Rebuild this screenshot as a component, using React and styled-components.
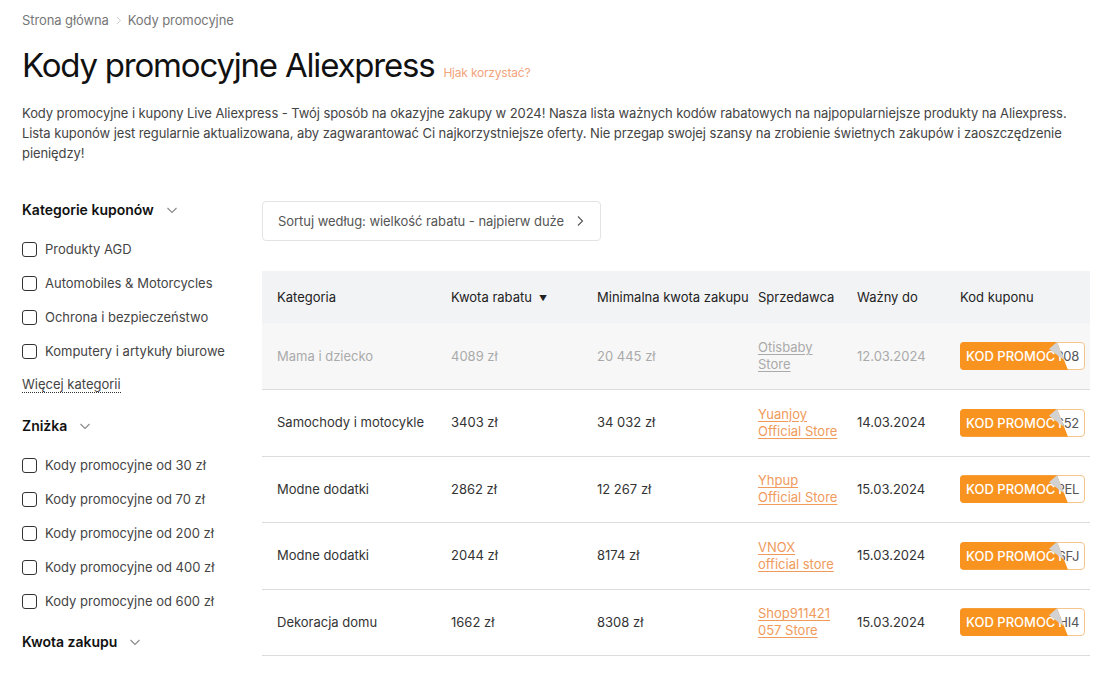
import React from "react";
import styled, { createGlobalStyle } from "styled-components";

const GlobalStyle = createGlobalStyle`
  * { box-sizing: border-box; }
  body {
    margin: 0;
    background: #fff;
    font-family: Inter, "Noto Sans", Arial, sans-serif;
    color: #333;
  }
`;

const ORANGE = "#f7931e";

const Page = styled.div`
  padding: 10px 17px 20px 22px;
`;

const Breadcrumbs = styled.nav`
  display: flex;
  align-items: center;
  gap: 5px;
  font-size: 13px;
  line-height: 20px;
  color: #777;
  letter-spacing: -0.1px;
`;

const Crumb = styled.span`
  color: #777;
`;

const TitleRow = styled.div`
  display: flex;
  align-items: baseline;
  gap: 9px;
  margin-top: 15px;
`;

const Title = styled.h1`
  margin: 0;
  font-size: 33px;
  line-height: 40px;
  font-weight: 400;
  color: #111;
  letter-spacing: -1.2px;
`;

const HowTo = styled.a`
  font-size: 12px;
  color: #f2a47c;
  text-decoration: none;
  letter-spacing: -0.2px;
`;

const Intro = styled.p`
  margin: 18px 0 0;
  font-size: 13px;
  line-height: 20px;
  color: #444;
  max-width: 1058px;
  letter-spacing: -0.08px;
`;

const Layout = styled.div`
  display: grid;
  grid-template-columns: 240px 1fr;
  margin-top: 37px;
`;

const Sidebar = styled.aside`
  display: flex;
  flex-direction: column;
`;

const FilterGroup = styled.div`
  display: flex;
  flex-direction: column;
  & + & {
    margin-top: 14px;
  }
`;

const GroupHeading = styled.div`
  display: flex;
  align-items: center;
  gap: 12px;
  font-size: 14px;
  line-height: 20px;
  font-weight: 600;
  color: #111;
  margin-bottom: 12px;
`;

const Option = styled.label`
  display: flex;
  align-items: center;
  gap: 8px;
  height: 34px;
  font-size: 13px;
  color: #444;
`;

const Box = styled.span`
  width: 15px;
  height: 15px;
  border: 1.5px solid #333;
  border-radius: 3px;
  flex: none;
`;

const MoreRow = styled.div`
  height: 34px;
  display: flex;
  align-items: center;
`;

const MoreLink = styled.a`
  font-size: 13px;
  color: #444;
  text-decoration: none;
  border-bottom: 1px dotted #333;
  line-height: 15px;
`;

const Main = styled.main`
  display: flex;
  flex-direction: column;
  align-items: flex-start;
  padding-top: 1px;
`;

const SortButton = styled.button`
  display: flex;
  align-items: center;
  gap: 10px;
  height: 40px;
  padding: 0 14px 0 15px;
  background: #fff;
  border: 1px solid #e3e3e3;
  border-radius: 4px;
  font-family: inherit;
  font-size: 13px;
  letter-spacing: -0.05px;
  color: #555;
  cursor: pointer;
`;

const Table = styled.table`
  margin-top: 30px;
  width: 828px;
  border-collapse: collapse;
  table-layout: fixed;
  font-size: 13px;
`;

const HeadCell = styled.th`
  height: 52px;
  padding: 0 4px 0 15px;
  background: #f2f3f5;
  text-align: left;
  font-weight: 400;
  color: #222;
  white-space: nowrap;
`;

const SortMark = styled.span`
  font-size: 8px;
  margin-left: 7px;
  vertical-align: 1px;
`;

const Row = styled.tr`
  background: ${(p) => (p.$expired ? "#f7f7f7" : "#fff")};
  color: ${(p) => (p.$expired ? "#aaa" : "#333")};
  border-bottom: 1px solid #dcdcdc;
`;

const Cell = styled.td`
  height: 66.5px;
  padding: 0 4px 0 15px;
  vertical-align: middle;
  line-height: 17px;
`;

const SellerLink = styled.a`
  display: block;
  white-space: nowrap;
  color: ${(p) => (p.$expired ? "#aaa" : "#f09a5c")};
  text-decoration: underline;
  text-underline-offset: 2px;
`;

const Coupon = styled.div`
  position: relative;
  width: 125px;
  height: 28px;
`;

const CodeBox = styled.div`
  height: 100%;
  border: 1px solid #f5c58c;
  border-radius: 4px;
  background: #fff;
  color: #555;
  font-size: 13px;
  letter-spacing: -0.3px;
  line-height: 26px;
  text-align: right;
  padding-right: 5px;
`;

const CouponButton = styled.div`
  position: absolute;
  inset: 0 auto 0 0;
  width: 108px;
  background: ${ORANGE};
  border-radius: 4px 0 0 4px;
  clip-path: polygon(0 0, 97px 0, 108px 100%, 0 100%);
  color: #fff;
  font-weight: 500;
  font-size: 13px;
  line-height: 28px;
  padding-left: 6px;
  white-space: nowrap;
  overflow: hidden;
`;

/* peeled corner of the coupon cover */
const Fold = styled.div`
  position: absolute;
  left: 89px;
  top: 0;
  width: 16px;
  height: 19px;
  background: #d2d2d2;
  clip-path: polygon(8px 0, 15px 18px, 0 7px);
`;

const Chevron = ({ dir = "down", size = 12, color = "#888" }) => (
  <svg width={size} height={size} viewBox="0 0 12 12" fill="none">
    {dir === "down" ? (
      <path d="M1.5 4l4.5 4.5L10.5 4" stroke={color} strokeWidth="1.1" />
    ) : (
      <path d="M4 1.5l4.5 4.5L4 10.5" stroke={color} strokeWidth="1.1" />
    )}
  </svg>
);

const categories = [
  "Produkty AGD",
  "Automobiles & Motorcycles",
  "Ochrona i bezpieczeństwo",
  "Komputery i artykuły biurowe",
];

const discounts = [30, 70, 200, 400, 600].map((v) => `Kody promocyjne od ${v} zł`);

const coupons = [
  { cat: "Mama i dziecko", amount: "4089 zł", min: "20 445 zł", seller: ["Otisbaby", "Store"], date: "12.03.2024", code: "308", expired: true },
  { cat: "Samochody i motocykle", amount: "3403 zł", min: "34 032 zł", seller: ["Yuanjoy", "Official Store"], date: "14.03.2024", code: "652" },
  { cat: "Modne dodatki", amount: "2862 zł", min: "12 267 zł", seller: ["Yhpup", "Official Store"], date: "15.03.2024", code: "PEL" },
  { cat: "Modne dodatki", amount: "2044 zł", min: "8174 zł", seller: ["VNOX", "official store"], date: "15.03.2024", code: "6FJ" },
  { cat: "Dekoracja domu", amount: "1662 zł", min: "8308 zł", seller: ["Shop911421", "057 Store"], date: "15.03.2024", code: "HI4" },
];

const columns = [174, 146, 161, 99, 103, 145];

export default function App() {
  return (
    <>
      <GlobalStyle />
      <Page>
        <Breadcrumbs>
          <Crumb>Strona główna</Crumb>
          <Chevron dir="right" size={9} color="#bbb" />
          <Crumb>Kody promocyjne</Crumb>
        </Breadcrumbs>

        <TitleRow>
          <Title>Kody promocyjne Aliexpress</Title>
          <HowTo href="#">Hjak korzystać?</HowTo>
        </TitleRow>

        <Intro>
          Kody promocyjne i kupony Live Aliexpress - Twój sposób na okazyjne zakupy w 2024! Nasza lista ważnych
          kodów rabatowych na najpopularniejsze produkty na Aliexpress. Lista kuponów jest regularnie
          aktualizowana, aby zagwarantować Ci najkorzystniejsze oferty. Nie przegap swojej szansy na zrobienie
          świetnych zakupów i zaoszczędzenie pieniędzy!
        </Intro>

        <Layout>
          <Sidebar>
            <FilterGroup>
              <GroupHeading>
                Kategorie kuponów <Chevron />
              </GroupHeading>
              {categories.map((c) => (
                <Option key={c}>
                  <Box />
                  {c}
                </Option>
              ))}
              <MoreRow>
                <MoreLink href="#">Więcej kategorii</MoreLink>
              </MoreRow>
            </FilterGroup>

            <FilterGroup>
              <GroupHeading>
                Zniżka <Chevron />
              </GroupHeading>
              {discounts.map((d) => (
                <Option key={d}>
                  <Box />
                  {d}
                </Option>
              ))}
            </FilterGroup>

            <FilterGroup>
              <GroupHeading>
                Kwota zakupu <Chevron />
              </GroupHeading>
            </FilterGroup>
          </Sidebar>

          <Main>
            <SortButton>
              Sortuj według: wielkość rabatu - najpierw duże
              <Chevron dir="right" size={12} color="#555" />
            </SortButton>

            <Table>
              <colgroup>
                {columns.map((w, i) => (
                  <col key={i} style={{ width: w }} />
                ))}
              </colgroup>
              <thead>
                <tr>
                  <HeadCell>Kategoria</HeadCell>
                  <HeadCell>
                    Kwota rabatu<SortMark>▼</SortMark>
                  </HeadCell>
                  <HeadCell>Minimalna kwota zakupu</HeadCell>
                  <HeadCell>Sprzedawca</HeadCell>
                  <HeadCell>Ważny do</HeadCell>
                  <HeadCell>Kod kuponu</HeadCell>
                </tr>
              </thead>
              <tbody>
                {coupons.map((c, i) => (
                  <Row key={i} $expired={c.expired}>
                    <Cell>{c.cat}</Cell>
                    <Cell>{c.amount}</Cell>
                    <Cell>{c.min}</Cell>
                    <Cell>
                      <SellerLink href="#" $expired={c.expired}>
                        {c.seller[0]}
                        <br />
                        {c.seller[1]}
                      </SellerLink>
                    </Cell>
                    <Cell>{c.date}</Cell>
                    <Cell>
                      <Coupon>
                        <CodeBox>{c.code}</CodeBox>
                        <CouponButton>KOD PROMOCYJNY</CouponButton>
                        <Fold />
                      </Coupon>
                    </Cell>
                  </Row>
                ))}
              </tbody>
            </Table>
          </Main>
        </Layout>
      </Page>
    </>
  );
}
